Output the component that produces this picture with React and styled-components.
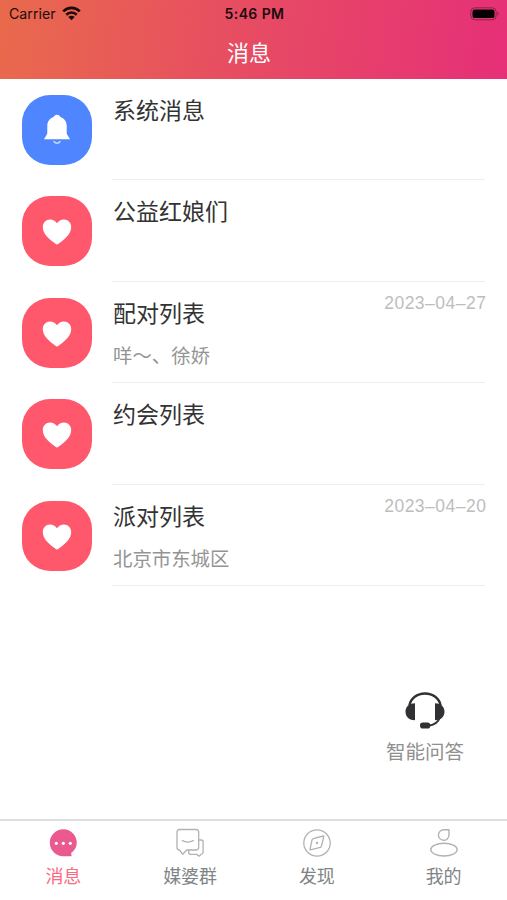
import React, { useState } from 'react';
import styled, { createGlobalStyle } from 'styled-components';

const GlobalStyle = createGlobalStyle`
  * {
    box-sizing: border-box;
  }

  body {
    margin: 0;
    background-color: #ffffff;
    font-family: 'Liberation Sans', 'Noto Sans CJK SC', sans-serif;
  }
`;

// --- Layout ---
const Screen = styled.div`
  display: flex;
  flex-direction: column;
  height: 100vh;
  background-color: #fff;
  overflow: hidden;
`;

const Header = styled.header`
  flex-shrink: 0;
  height: 79px;
  background: linear-gradient(97deg, #e96a4c 0%, #e74e61 45%, #e62f78 100%);
`;

const StatusBar = styled.div`
  display: grid;
  grid-template-columns: 1fr auto 1fr;
  align-items: center;
  height: 27px;
  padding: 0 7px 0 9px;
  font-family: Inter, sans-serif;
  color: #1c0b0e;
`;

const Carrier = styled.div`
  display: flex;
  align-items: center;
  gap: 6px;
  font-size: 14.2px;
`;

const Clock = styled.div`
  font-size: 14px;
  font-weight: 600;
  letter-spacing: 0.4px;
`;

const BatterySlot = styled.div`
  display: flex;
  justify-content: flex-end;
`;

const PageTitle = styled.h1`
  margin: 0;
  padding-right: 9px;
  font-size: 22px;
  font-weight: 400;
  line-height: 54px;
  text-align: center;
  color: #fff;
`;

// --- Message list ---
const MessageList = styled.ul`
  flex: 1;
  margin: 0;
  padding: 0 22px 0 21.5px;
  list-style: none;
`;

const MessageItem = styled.li`
  display: flex;
  gap: 20.5px;
  height: 101.4px;
`;

const Avatar = styled.div`
  display: flex;
  align-items: center;
  justify-content: center;
  flex-shrink: 0;
  width: 70px;
  height: 70px;
  margin-top: 16px;
  border-radius: 28px;
  background-color: ${({ $color }) => $color};
`;

const MessageBody = styled.div`
  display: flex;
  flex: 1;
  justify-content: space-between;
  border-bottom: 1px solid #ededed;
`;

const MessageTitle = styled.h2`
  margin: 0;
  padding: 15px 0 0 1px;
  font-size: 23px;
  font-weight: 400;
  line-height: 34px;
  color: #333;
`;

const Preview = styled.p`
  margin: 0;
  padding: 11.5px 0 0 1px;
  font-size: 19.4px;
  line-height: 28px;
  color: #949494;
`;

const MessageDate = styled.time`
  margin-right: -1.5px;
  padding-top: 10px;
  font-size: 17.5px;
  line-height: 22px;
  letter-spacing: 0.5px;
  color: #bdbdbd;
`;

// --- Assistant ---
const AssistantButton = styled.button`
  display: flex;
  flex-direction: column;
  align-items: center;
  align-self: flex-end;
  flex-shrink: 0;
  gap: 8px;
  margin: 0 43px 52px 0;
  padding: 0;
  border: none;
  background: none;
  font-family: inherit;
  font-size: 19.5px;
  line-height: 30px;
  color: #8f8f8f;
  cursor: pointer;
`;

// --- Tab bar ---
const TabBar = styled.nav`
  display: grid;
  grid-template-columns: repeat(4, 1fr);
  flex-shrink: 0;
  height: 81px;
  border-top: 2px solid #dfdfdf;
`;

const TabButton = styled.button`
  display: flex;
  flex-direction: column;
  align-items: center;
  gap: 6px;
  padding: 7px 0 0;
  border: none;
  background: none;
  font-family: inherit;
  font-size: 18px;
  line-height: 27px;
  color: ${({ $active }) => ($active ? '#fb6a80' : '#808486')};
  cursor: pointer;
`;

// --- Icons ---
const WifiIcon = () => (
  <svg width="19" height="15" viewBox="0 0 19 15">
    <g fill="none" stroke="#1c0b0e" strokeWidth="2.6">
      <path d="M1.2 5.4C6 .7 13 .7 17.8 5.4" />
      <path d="M4.3 8.7c3-2.9 7.4-2.9 10.4 0" />
    </g>
    <path d="M9.5 14.2 6.3 10.9c1.8-1.7 4.6-1.7 6.4 0z" fill="#1c0b0e" />
  </svg>
);

const BatteryIcon = () => (
  <svg width="30" height="14" viewBox="0 0 30 14">
    <rect x="0.8" y="0.8" width="25.4" height="12" rx="4" fill="none" stroke="#8d2348" strokeWidth="1" />
    <rect x="2.5" y="2.5" width="22" height="8.6" rx="2.2" fill="#050002" />
    <path d="M27.5 4.8c1.6.7 1.600 3.300 0 4z" fill="#8d2348" />
  </svg>
);

const BellIcon = () => (
  <svg width="28" height="32" viewBox="0 0 28 32">
    <path
      d="M14 .8c1.700 0 2.900.9 3.300 2.300 3.700 1.200 6.400 4.300 6.400 8.700v6.400c0 1.400.300 2.200.9 3.100l2.400 3.900H1l2.400-3.900c.600-.900.900-1.700.9-3.100v-6.400c0-4.400 2.700-7.500 6.400-8.700C11.100 1.700 12.300.8 14 .8z"
      fill="#fff"
    />
    <path d="M10 27h8c-.8 1.900-2.100 3-4 3s-3.200-1.100-4-3z" fill="#c3d4ff" />
    <path d="M11.800 27h4.400c-.4.900-1.200 1.300-2.200 1.300s-1.800-.4-2.200-1.300z" fill="#4f86ff" />
  </svg>
);

const HeartIcon = () => (
  <svg width="30" height="28" viewBox="0 0 30 28">
    <path
      d="M15 27.400c-1 0-2-.9-3.500-2.100C6 21.100.8 16.300.8 10c0-4.400 3.200-7.600 7.200-7.600 2.900 0 5.500 1.400 7 3.800 1.500-2.400 4.100-3.800 7-3.800 4 0 7.200 3.200 7.200 7.600 0 6.300-5.200 11.100-10.700 15.300-1.500 1.200-2.500 2.100-3.500 2.100z"
      fill="#fff"
    />
  </svg>
);

const HeadsetIcon = () => (
  <svg width="40" height="37" viewBox="0 0 40 37">
    <path d="M4.300 13.500C5.800 6.200 12 1.500 20 1.500s14.200 4.700 15.700 12" fill="none" stroke="#303133" strokeWidth="2.3" />
    <path d="M10 11.300v16.900c-5.600 0-9.500-3.300-9.500-8.500s3.900-8.400 9.500-8.400z" fill="#303133" />
    <path d="M30 11.300v16.900c5.600 0 9.500-3.300 9.500-8.500s-3.900-8.400-9.500-8.400z" fill="#303133" />
    <path d="M35.300 24.500c-1.800 5.300-5.800 8.800-12.300 9.200" fill="none" stroke="#303133" strokeWidth="2" />
    <rect x="15" y="30.500" width="10.300" height="6" rx="2.800" fill="#303133" />
  </svg>
);

const ChatIcon = () => (
  <svg width="28" height="30" viewBox="0 0 28 30">
    <path d="M14.300 1.300a13.500 13.500 0 1 0 0 27h7.400c.6 0 .9-.4.800-1l-.4-2.300c3.500-2.400 5.700-6.100 5.700-10.300C27.800 7.300 21.800 1.300 14.300 1.300z" fill="#ea5a8e" />
    <g fill="#fff">
      <circle cx="7.300" cy="15.300" r="1.600" />
      <circle cx="14.300" cy="15.300" r="1.600" />
      <circle cx="21.300" cy="15.300" r="1.600" />
    </g>
  </svg>
);

const GroupIcon = () => (
  <svg width="28" height="30" viewBox="0 0 28 30" fill="none" stroke="#b0b2b3" strokeWidth="1.3" strokeLinecap="round" strokeLinejoin="round">
    <path d="M3.500 1.500h16.700a2.500 2.500 0 0 1 2.500 2.500v15.500a2.500 2.500 0 0 1-2.500 2.500h-9.500l-3.900 4.300L3.400 22A2.500 2.500 0 0 1 1 19.500V4a2.500 2.500 0 0 1 2.500-2.500z" />
    <path d="M6.300 12.700c3.500 1.700 7.500 1.700 11 0" />
    <path d="M22.700 12h2.400a2 2 0 0 1 2 2v10.300a2 2 0 0 1-1.800 2l-2.300 1.900-2.300-1.900h-6a2 2 0 0 1-2-2V22" />
  </svg>
);

const CompassIcon = () => (
  <svg width="28" height="30" viewBox="0 0 28 30" fill="none" stroke="#b0b2b3" strokeWidth="1.3" strokeLinejoin="round">
    <circle cx="14" cy="15" r="13.2" />
    <path d="M20.800 8.500 18.500 18c-.2.700-.5 1.100-1.200 1.400L7.500 21.800c-.4.100-.6-.1-.5-.5l2-9.300c.2-.7.600-1.200 1.300-1.400l9.900-2.600c.5-.1.700.1.600.5z" />
    <circle cx="14" cy="15" r="1.2" fill="#b0b2b3" stroke="none" />
  </svg>
);

const ProfileIcon = () => (
  <svg width="28" height="30" viewBox="0 0 28 30" fill="none" stroke="#b0b2b3" strokeWidth="1.4" strokeLinejoin="round">
    <path d="M19 1.700v5.600a5.300 5.300 0 1 1-5.300-5.600z" />
    <ellipse cx="14" cy="21.600" rx="13.200" ry="6.400" />
  </svg>
);

const BLUE = '#4f86ff';
const PINK = '#ff576c';

const messages = [
  { id: 1, title: '系统消息', color: BLUE, icon: <BellIcon /> },
  { id: 2, title: '公益红娘们', color: PINK, icon: <HeartIcon /> },
  { id: 3, title: '配对列表', preview: '咩～、徐娇', date: '2023–04–27', color: PINK, icon: <HeartIcon /> },
  { id: 4, title: '约会列表', color: PINK, icon: <HeartIcon /> },
  { id: 5, title: '派对列表', preview: '北京市东城区', date: '2023–04–20', color: PINK, icon: <HeartIcon /> },
];

const tabs = [
  { key: 'message', label: '消息', icon: <ChatIcon /> },
  { key: 'group', label: '媒婆群', icon: <GroupIcon /> },
  { key: 'discover', label: '发现', icon: <CompassIcon /> },
  { key: 'mine', label: '我的', icon: <ProfileIcon /> },
];

function App() {
  const [activeTab, setActiveTab] = useState('message');

  return (
    <Screen>
      <GlobalStyle />
      <Header>
        <StatusBar>
          <Carrier>
            Carrier
            <WifiIcon />
          </Carrier>
          <Clock>5:46 PM</Clock>
          <BatterySlot>
            <BatteryIcon />
          </BatterySlot>
        </StatusBar>
        <PageTitle>消息</PageTitle>
      </Header>

      <MessageList>
        {messages.map(message => (
          <MessageItem key={message.id}>
            <Avatar $color={message.color}>{message.icon}</Avatar>
            <MessageBody>
              <div>
                <MessageTitle>{message.title}</MessageTitle>
                {message.preview && <Preview>{message.preview}</Preview>}
              </div>
              {message.date && <MessageDate>{message.date}</MessageDate>}
            </MessageBody>
          </MessageItem>
        ))}
      </MessageList>

      <AssistantButton>
        <HeadsetIcon />
        智能问答
      </AssistantButton>

      <TabBar>
        {tabs.map(tab => (
          <TabButton key={tab.key} $active={activeTab === tab.key} onClick={() => setActiveTab(tab.key)}>
            {tab.icon}
            {tab.label}
          </TabButton>
        ))}
      </TabBar>
    </Screen>
  );
}

export default App;
